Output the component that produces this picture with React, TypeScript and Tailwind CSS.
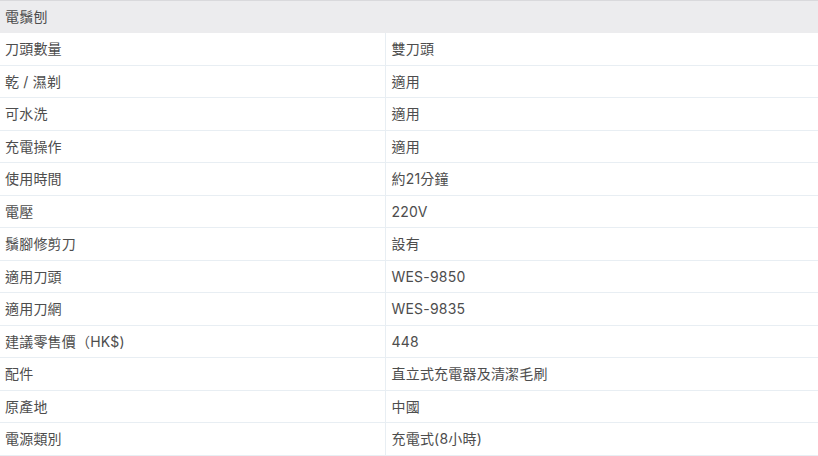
const rows: [string, string][] = [
  ["刀頭數量", "雙刀頭"],
  ["乾 / 濕剃", "適用"],
  ["可水洗", "適用"],
  ["充電操作", "適用"],
  ["使用時間", "約21分鐘"],
  ["電壓", "220V"],
  ["鬚腳修剪刀", "設有"],
  ["適用刀頭", "WES-9850"],
  ["適用刀網", "WES-9835"],
  ["建議零售價（HK$)", "448"],
  ["配件", "直立式充電器及清潔毛刷"],
  ["原產地", "中國"],
  ["電源類別", "充電式(8小時)"],
];

export default function App() {
  return (
    <div className="w-[818px] h-[456px] bg-white font-['Inter','Noto_Sans_CJK_TC',sans-serif] text-[14px] tracking-[0.2px] text-[#4d4d4d]">
      <table className="w-full border-collapse">
        <thead>
          <tr className="h-[32px] bg-[#ececee] border-t border-[#d9d9dc]">
            <th colSpan={2} className="px-[5px] text-left font-normal">
              電鬚刨
            </th>
          </tr>
        </thead>
        <tbody>
          {rows.map(([k, v]) => (
            <tr key={k} className="h-[32.5px] border-b border-[#e8eef3]">
              <td className="w-[385px] pl-[5px] border-r border-[#e8eef3]">{k}</td>
              <td className="pl-[6px]">{v}</td>
            </tr>
          ))}
        </tbody>
      </table>
    </div>
  );
}
